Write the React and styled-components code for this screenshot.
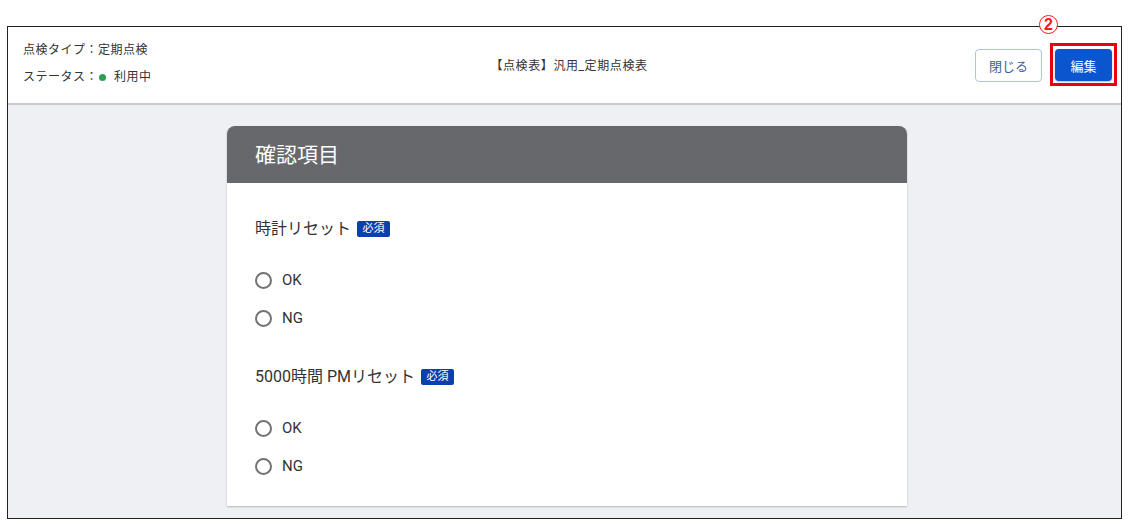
import styled, { createGlobalStyle } from 'styled-components';

const GlobalStyle = createGlobalStyle`
  body {
    margin: 0;
    background: #ffffff;
    font-family: Roboto, "Noto Sans CJK JP", sans-serif;
    color: #333333;
  }
`;

const questions = [
  { id: 1, label: '時計リセット' },
  { id: 2, label: '5000時間 PMリセット' },
];

const App = () => {
  return (
    <>
      <GlobalStyle />
      <Frame>
        <StepMark>2</StepMark>
        <Header>
          <Meta>
            <MetaLine>点検タイプ：定期点検</MetaLine>
            <MetaLine>
              ステータス：<StatusDot />利用中
            </MetaLine>
          </Meta>
          <Title>【点検表】汎用_定期点検表</Title>
          <Actions>
            <OutlineButton>閉じる</OutlineButton>
            <Highlight>
              <PrimaryButton>編集</PrimaryButton>
            </Highlight>
          </Actions>
        </Header>
        <Main>
          <Card>
            <CardHead>確認項目</CardHead>
            <CardBody>
              {questions.map((q) => (
                <Question key={q.id}>
                  <QuestionLabel>
                    {q.label}
                    <Required>必須</Required>
                  </QuestionLabel>
                  <Options>
                    {['OK', 'NG'].map((opt) => (
                      <Option key={opt}>
                        <Radio />
                        {opt}
                      </Option>
                    ))}
                  </Options>
                </Question>
              ))}
            </CardBody>
          </Card>
        </Main>
      </Frame>
    </>
  );
};

export default App;

const Frame = styled.div`
  position: relative;
  margin: 26px 0 0 7px;
  width: 1115px;
  height: 493px;
  box-sizing: border-box;
  border: 1px solid #222222;
  display: flex;
  flex-direction: column;
`;

// 手順番号（赤丸）
const StepMark = styled.span`
  position: absolute;
  top: -12px;
  left: 1031px;
  width: 19px;
  height: 19px;
  box-sizing: border-box;
  border: 1.5px solid #ff1a1a;
  border-radius: 50%;
  display: flex;
  align-items: center;
  justify-content: center;
  font-family: "Liberation Sans", sans-serif;
  font-size: 16px;
  font-weight: 700;
  color: #ff1a1a;
  background: #ffffff;
`;

const Header = styled.header`
  height: 76px;
  display: grid;
  grid-template-columns: 1fr auto 1fr;
  align-items: center;
  padding: 0 9px 0 15px;
  background: #ffffff;
  border-bottom: 2px solid #c9cacd;
`;

const Meta = styled.div`
  display: flex;
  flex-direction: column;
  gap: 9px;
  padding-bottom: 3px;
`;

const MetaLine = styled.div`
  display: flex;
  align-items: center;
  font-size: 12px;
  line-height: 18px;
  letter-spacing: 0.5px;
  color: #333333;
`;

const StatusDot = styled.span`
  display: inline-block;
  width: 7px;
  height: 7px;
  border-radius: 50%;
  background: #2f9e52;
  margin: 0 8px 0 1px;
`;

const Title = styled.div`
  font-size: 12px;
  letter-spacing: 0.6px;
  color: #333333;
  padding-bottom: 1px;
  margin-left: 3px;
`;

const Actions = styled.div`
  display: flex;
  justify-content: flex-end;
  align-items: center;
  gap: 13px;
`;

const OutlineButton = styled.button`
  width: 67px;
  height: 33px;
  border: 1px solid #a9c3ee;
  border-radius: 4px;
  background: #ffffff;
  color: #3f5f96;
  font-family: inherit;
  font-size: 13px;
`;

const Highlight = styled.span`
  position: relative;
  display: inline-flex;

  &::after {
    content: '';
    position: absolute;
    top: -6px;
    bottom: -5px;
    left: -5px;
    right: -5px;
    border: 3px solid #e60012;
    pointer-events: none;
  }
`;

const PrimaryButton = styled.button`
  width: 57px;
  height: 32px;
  border: none;
  border-radius: 4px;
  background: #0b55cf;
  color: #ffffff;
  font-family: inherit;
  font-size: 13px;
  box-shadow: 0 1px 2px rgba(0, 0, 0, 0.25);
`;

const Main = styled.main`
  flex: 1;
  background: #eff0f4;
  padding: 21px 0 0 219px;
  overflow: hidden;
`;

const Card = styled.section`
  width: 680px;
  background: #ffffff;
  border-radius: 8px 8px 0 0;
  box-shadow: 0 1px 2px rgba(0, 0, 0, 0.25);
`;

const CardHead = styled.h2`
  margin: 0;
  height: 57px;
  box-sizing: border-box;
  display: flex;
  align-items: center;
  padding: 0 0 4px 28px;
  background: #67686c;
  border-radius: 8px 8px 0 0;
  color: #ffffff;
  font-size: 21px;
  font-weight: 400;
`;

const CardBody = styled.div`
  padding: 36px 28px 21px;
  display: flex;
  flex-direction: column;
  gap: 30px;
`;

const Question = styled.div`
  display: flex;
  flex-direction: column;
  gap: 22px;
`;

const QuestionLabel = styled.div`
  display: flex;
  align-items: center;
  font-size: 16px;
  line-height: 20px;
  color: #333333;
`;

const Required = styled.span`
  margin-left: 6px;
  width: 33px;
  height: 16px;
  display: inline-flex;
  align-items: center;
  justify-content: center;
  border-radius: 2px;
  background: #0b3fae;
  color: #ffffff;
  font-size: 11px;
`;

const Options = styled.div`
  display: flex;
  flex-direction: column;
`;

const Option = styled.label`
  height: 38px;
  display: flex;
  align-items: center;
  gap: 10px;
  font-size: 15px;
  color: #333333;
`;

const Radio = styled.span`
  width: 17px;
  height: 17px;
  box-sizing: border-box;
  border: 2px solid #737373;
  border-radius: 50%;
`;
